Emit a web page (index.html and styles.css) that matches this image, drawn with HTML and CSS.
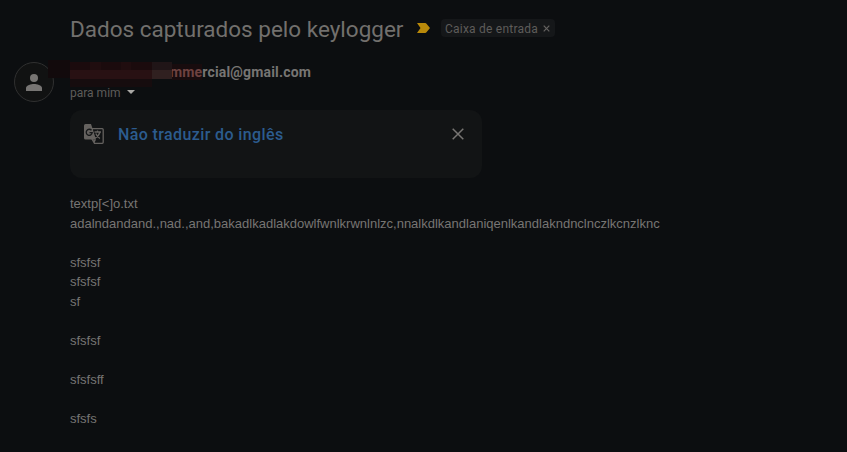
FILE: index.html
```html
<!DOCTYPE html>
<html lang="pt-BR">
<head>
<meta charset="utf-8">
<title>Dados capturados pelo keylogger</title>
<link rel="stylesheet" href="styles.css">
</head>
<body>
<main class="mail">
  <header class="subject">
    <h1>Dados capturados pelo keylogger</h1>
    <svg class="marker" width="13" height="10" viewBox="0 0 13 10"><path d="M0 0h8.2q.8 0 1.3.7L13 5 9.5 9.3q-.5.7-1.3.7H0l3.5-5z"/></svg>
    <span class="label"><span class="label-name">Caixa de entrada</span><svg width="7" height="7" viewBox="0 0 7 7"><path d="M.7.7l5.6 5.6M6.3.7L.7 6.3"/></svg></span>
  </header>
  <section class="sender">
    <div class="avatar"><svg width="16" height="17" viewBox="0 0 16 17"><circle cx="8" cy="4" r="4"/><path d="M0 17v-3c0-2.6 5.3-4 8-4s8 1.4 8 4v3z"/></svg></div>
    <div class="sender-info">
      <div class="address">
        <div class="mosaic"><i></i><i></i><i></i><i></i><i></i><i></i><i></i><i></i><i></i><i></i><i></i><i></i><i></i><i></i><i></i><i></i><i></i><i></i><i></i><i></i><i></i><i></i><i></i><i></i><i></i><i></i><i></i><i></i><i></i><i></i></div>
        <b><span class="tint">mme</span>rcial@gmail.com</b>
      </div>
      <div class="recipient"><span>para mim</span><i class="caret"></i></div>
    </div>
  </section>
  <section class="translate">
    <svg class="g-icon" width="20" height="20" viewBox="0 0 20 20"><path class="page" d="M8 4.7h10.2q1 0 1 1v12.6q0 1-1 1H10.500L8 15z"/><path class="front" d="M1.500 0H7l1.500 4.500L12 15.500H1.500Q0 15.500 0 14V1.500Q0 0 1.500 0zM9 15.800h3L10.300 19z"/><path class="g" d="M7.500 6.300A3 3 0 1 0 8.200 8.700H5.500"/><path class="wen" d="M10.500 8h6.500M13.500 6.500V8M16 8q-1 4-5 6.200M11.800 9.500q1.500 3.500 4.200 5"/></svg>
    <a>Não traduzir do inglês</a>
    <svg class="close" width="12" height="12" viewBox="0 0 12 12"><path d="M.7.7l10.600 10.600M11.300.7L.7 11.300"/></svg>
  </section>
  <article class="message">textp[&lt;]o.txt
adalndandand.,nad.,and,bakadlkadlakdowlfwnlkrwnlnlzc,nnalkdlkandlaniqenlkandlakndnclnczlkcnzlknc

sfsfsf
sfsfsf
sf

sfsfsf

sfsfsff

sfsfs</article>
</main>
</body>
</html>
```
FILE: styles.css
```css
* { box-sizing: border-box; }
body { margin: 0; height: 452px; overflow: hidden; background: #0c0e10; color: #777573; font-family: Roboto, sans-serif; }
svg { display: block; flex: none; }
.mail { padding: 17px 14px 0; }
.subject { display: flex; align-items: center; height: 22px; padding-left: 56px; }
h1 { margin: 0; padding-top: 2px; width: 347px; font-size: 22.500px; font-weight: 400; letter-spacing: 0; line-height: 22px; white-space: nowrap; color: #72706d; }
.marker { fill: #b9890a; }
.label { display: flex; align-items: center; width: 114px; height: 18px; margin-left: 11px; padding-left: 4px; border-radius: 4px; background: #151719; color: #5e5c5a; font-size: 12px; white-space: nowrap; }
.label-name { width: 98px; padding-top: 1px; letter-spacing: .22px; }
.label svg { margin-top: 1px; stroke: #656361; stroke-width: 1.200; }
.sender { display: flex; margin-top: 23px; height: 48px; }
.avatar { display: grid; place-items: center; width: 40px; height: 40px; border: 1px solid #303030; border-radius: 50%; background: #111212; fill: #777573; }
.sender-info { margin-left: 16px; }
.address { position: relative; display: flex; height: 20px; padding-left: 100px; align-items: center; font-size: 14px; line-height: 20px; letter-spacing: .17px; white-space: nowrap; }
.tint { color: #6e4240; background: #180c0e; }
.mosaic { position: absolute; left: 0; top: 0; display: grid; grid-template-columns: repeat(10, 1fr); grid-template-rows: 8px 9px 8px; width: 102px; height: 25px; background: #1b0b0d; }
.mosaic::before { content: ""; position: absolute; left: -22px; top: -2px; width: 22px; height: 18px; background: #120a0c; }
.mosaic i:nth-child(3n) { background: #200d0f; }
.mosaic i:nth-child(n+11):nth-child(-n+20) { background: #281113; }
.mosaic i:nth-child(12), .mosaic i:nth-child(15), .mosaic i:nth-child(18) { background: #351416; }
.mosaic i:nth-child(9), .mosaic i:nth-child(10) { background: #201517; }
.mosaic i:nth-child(n+19):nth-child(-n+20) { background: #302020; }
.mosaic i:nth-child(n+21) { background: #160c0e; }
.mosaic i:nth-child(n+29) { background: #0c0e10; }
.recipient { display: flex; align-items: center; height: 20px; padding-top: 1px; color: #5e5c5a; font-size: 12px; letter-spacing: 0; }
.caret { margin: -1px 0 0 6px; border: 4px solid transparent; border-top-color: #aaa8a5; border-bottom: 0; }
.translate { display: flex; width: 412px; height: 68px; margin: 0 0 0 56px; padding: 14px 18px 0 14px; border-radius: 12px; background: #121415; }
.translate a { margin-left: 14px; padding-top: 1px; color: #2c5c8e; font-size: 16px; font-weight: 500; line-height: 20px; letter-spacing: .39px; }
.close { margin: 4px 0 0 auto; stroke: #777573; stroke-width: 1.500; }
.page, .g, .wen { fill: none; stroke: #65625f; stroke-width: 1.300; }
.front { fill: #65625f; }
.g-icon .g { stroke: #17191a; }
.message { margin: 16px 0 0 56px; color: #777573; font: 13px/19.5px "Liberation Sans", sans-serif; white-space: pre; }
```
